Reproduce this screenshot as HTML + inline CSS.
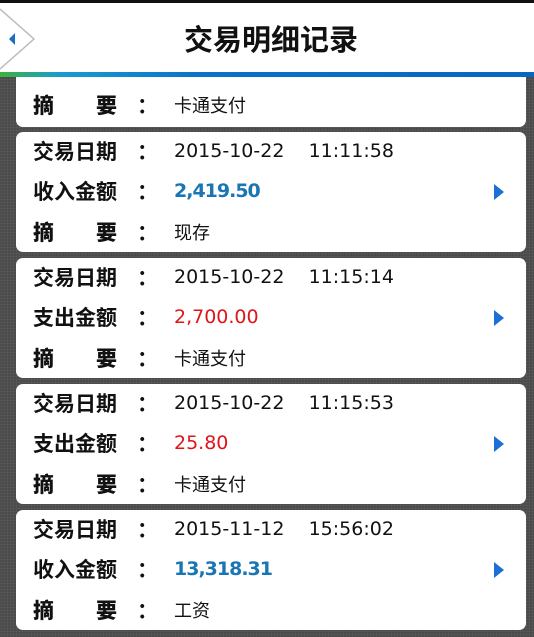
<!DOCTYPE html>
<html><head><meta charset="utf-8"><style>
*{margin:0;padding:0;box-sizing:border-box}
body{width:534px;height:637px;overflow:hidden;background:#4a4a4a;position:relative;font-family:"DejaVu Sans","Noto Sans CJK SC",sans-serif;
background-image:radial-gradient(#5a5a5a 1px,transparent 1px);background-size:3px 3px}
.top{position:absolute;left:0;top:0;width:534px;height:3px;background:#111}
.hdr{position:absolute;left:0;top:3px;width:534px;height:69px;background:#fff}
.grad{position:absolute;left:0;top:72px;width:534px;height:5px;background:linear-gradient(90deg,#3cb33c 0,#1a9bd0 60px,#0a72c8 200px,#0a66c0 534px)}
.title{position:absolute;left:0;width:534px;top:21px;text-align:center;font:bold 29px "Noto Sans CJK SC",sans-serif;color:#111;line-height:34px;padding-left:8px}
.card{position:absolute;left:16px;width:510px;height:120px;background:#fff;border-radius:7px}
.lab{position:absolute;left:17px;font:bold 21px "Noto Sans CJK SC",sans-serif;color:#111;line-height:24px;white-space:nowrap}
.lab b{position:absolute;left:0}
.val{position:absolute;left:158px;font-size:19px;color:#111;line-height:24px;font-family:"DejaVu Sans","Noto Sans CJK SC",sans-serif;white-space:pre}
.cn{font-family:"Noto Sans CJK SC",sans-serif;font-size:18px}
.blue{color:#1a75b5;font-weight:bold;letter-spacing:-1px}
.red{color:#e0141a}
.arr{position:absolute;left:478px;top:52px;width:0;height:0;border-top:8px solid transparent;border-bottom:8px solid transparent;border-left:10px solid #1c6fd4}
.c{position:absolute;left:104px}
</style></head><body>
<div class="top"></div>
<div class="card" style="top:40px;height:87px">
<div class="lab" style="top:53px"><b>摘</b><b style="left:63px">要</b><span class="c">：</span></div><div class="val cn" style="top:53px">卡通支付</div></div>

<div class="card" style="top:132px">
<div class="lab" style="top:7px">交易日期<span class="c">：</span></div><div class="val" style="top:7px">2015-10-22    11:11:58</div>
<div class="lab" style="top:47px">收入金额<span class="c">：</span></div><div class="val blue" style="top:47px">2,419.50</div>
<div class="lab" style="top:88px"><b>摘</b><b style="left:63px">要</b><span class="c">：</span></div><div class="val cn" style="top:88px">现存</div>
<div class="arr"></div></div>

<div class="card" style="top:258px">
<div class="lab" style="top:7px">交易日期<span class="c">：</span></div><div class="val" style="top:7px">2015-10-22    11:15:14</div>
<div class="lab" style="top:47px">支出金额<span class="c">：</span></div><div class="val red" style="top:47px">2,700.00</div>
<div class="lab" style="top:88px"><b>摘</b><b style="left:63px">要</b><span class="c">：</span></div><div class="val cn" style="top:88px">卡通支付</div>
<div class="arr"></div></div>

<div class="card" style="top:384px">
<div class="lab" style="top:7px">交易日期<span class="c">：</span></div><div class="val" style="top:7px">2015-10-22    11:15:53</div>
<div class="lab" style="top:47px">支出金额<span class="c">：</span></div><div class="val red" style="top:47px">25.80</div>
<div class="lab" style="top:88px"><b>摘</b><b style="left:63px">要</b><span class="c">：</span></div><div class="val cn" style="top:88px">卡通支付</div>
<div class="arr"></div></div>

<div class="card" style="top:510px">
<div class="lab" style="top:7px">交易日期<span class="c">：</span></div><div class="val" style="top:7px">2015-11-12    15:56:02</div>
<div class="lab" style="top:47px">收入金额<span class="c">：</span></div><div class="val blue" style="top:47px">13,318.31</div>
<div class="lab" style="top:88px"><b>摘</b><b style="left:63px">要</b><span class="c">：</span></div><div class="val cn" style="top:88px">工资</div>
<div class="arr"></div></div>

<div class="hdr"></div>
<svg style="position:absolute;left:0;top:3px" width="40" height="69" viewBox="0 0 40 69">
<polyline points="0,6 34,36 0,66" fill="#fff" stroke="#bbb" stroke-width="1.5"/>
<polygon points="15,30 9,36 15,42" fill="#1a6fc0"/>
</svg>
<div class="title">交易明细记录</div>
<div class="grad"></div>
</body></html>
